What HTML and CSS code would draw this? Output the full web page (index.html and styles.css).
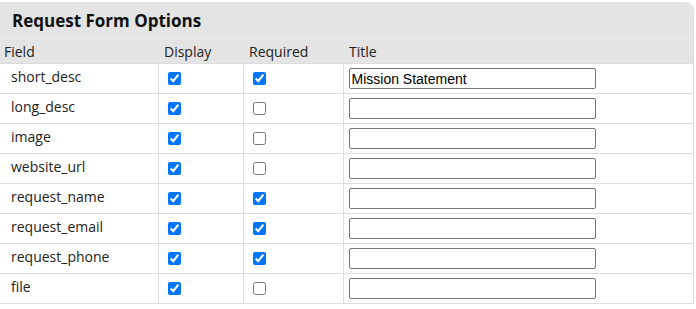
FILE: index.html
```html
<!DOCTYPE html>
<html lang="en">
  <head>
    <meta charset="UTF-8" />
    <title>Request Form Options</title>
    <link rel="stylesheet" href="styles.css">
  </head>
  <body>
    <div class="panel">
      <h2 class="panel-title">Request Form Options</h2>

      <table class="options">
        <thead>
          <tr>
            <th class="col-field">Field</th>
            <th class="col-display">Display</th>
            <th class="col-required">Required</th>
            <th>Title</th>
          </tr>
        </thead>
        <tbody>
          <tr>
            <td class="name">short_desc</td>
            <td><input type="checkbox" checked /></td>
            <td><input type="checkbox" checked /></td>
            <td class="title"><input class="title-input" type="text" value="Mission Statement" /></td>
          </tr>
          <tr>
            <td class="name">long_desc</td>
            <td><input type="checkbox" checked /></td>
            <td><input type="checkbox" /></td>
            <td class="title"><input class="title-input" type="text" /></td>
          </tr>
          <tr>
            <td class="name">image</td>
            <td><input type="checkbox" checked /></td>
            <td><input type="checkbox" /></td>
            <td class="title"><input class="title-input" type="text" /></td>
          </tr>
          <tr>
            <td class="name">website_url</td>
            <td><input type="checkbox" checked /></td>
            <td><input type="checkbox" /></td>
            <td class="title"><input class="title-input" type="text" /></td>
          </tr>
          <tr>
            <td class="name">request_name</td>
            <td><input type="checkbox" checked /></td>
            <td><input type="checkbox" checked /></td>
            <td class="title"><input class="title-input" type="text" /></td>
          </tr>
          <tr>
            <td class="name">request_email</td>
            <td><input type="checkbox" checked /></td>
            <td><input type="checkbox" checked /></td>
            <td class="title"><input class="title-input" type="text" /></td>
          </tr>
          <tr>
            <td class="name">request_phone</td>
            <td><input type="checkbox" checked /></td>
            <td><input type="checkbox" checked /></td>
            <td class="title"><input class="title-input" type="text" /></td>
          </tr>
          <tr>
            <td class="name">file</td>
            <td><input type="checkbox" checked /></td>
            <td><input type="checkbox" /></td>
            <td class="title"><input class="title-input" type="text" /></td>
          </tr>
        </tbody>
      </table>
    </div>
  </body>
</html>
```

FILE: styles.css
```css
body {
  margin: 0;
  padding-top: 2px;
  font-family: "Open Sans", "Noto Sans", sans-serif;
  color: #222;
  background: #fff;
}

.panel {
  width: 693px;
  background: #e4e4e4;
  border-radius: 0 9px 0 0;
  border-right: 1px solid #dcdcdc;
}

.panel-title {
  margin: 0;
  height: 36px;
  padding-left: 12px;
  font-size: 17px;
  line-height: 38px;
  font-weight: bold;
  color: #111;
  border-bottom: 1px solid #ececec;
}

.options {
  width: 100%;
  border-collapse: collapse;
  font-size: 14px;
}

.options th {
  height: 24px;
  padding: 0 0 0 6px;
  text-align: left;
  font-weight: normal;
  background: #e4e4e4;
  border-bottom: 1px solid #dcdcdc;
}

.options th.col-field {
  padding-left: 4px;
  width: 154px;
}

.options th.col-display {
  width: 79px;
}

.options th.col-required {
  width: 94px;
}

.options tbody tr {
  height: 30px;
}

.options td {
  padding: 0 0 4px 6px;
  line-height: 19px;
  background: #fff;
  border-bottom: 1px solid #dcdcdc;
  border-left: 1px solid #dcdcdc;
}

.options td.name {
  padding: 0 0 5px 11px;
  border-left: 0;
}

.options td.title {
  padding: 0 0 0 5px;
}

.options input[type="checkbox"] {
  margin: 0 0 0 3px;
  width: 13px;
  height: 13px;
  vertical-align: middle;
}

.title-input {
  box-sizing: border-box;
  width: 247px;
  height: 21px;
  padding: 1px 2px;
  font-family: "Liberation Sans", Arial, sans-serif;
  font-size: 14px;
  border: 1px solid #767676;
  border-radius: 2px;
}
```
